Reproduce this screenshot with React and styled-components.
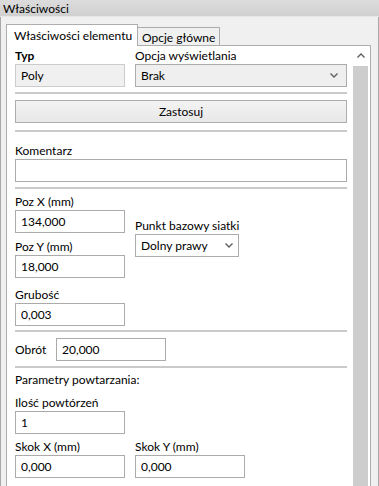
import React from 'react';
import styled, { createGlobalStyle } from 'styled-components';

const GlobalStyle = createGlobalStyle`
  html, body {
    margin: 0;
    padding: 0;
    background: #f0f0f0;
  }
  * {
    box-sizing: border-box;
  }
`;

const font = `font-family: Lato, "Noto Sans", sans-serif; font-size: 12px; color: #000;`;

const Window = styled.div`
  ${font}
  width: 379px;
  height: 486px;
  overflow: hidden;
  display: flex;
  flex-direction: column;
  background: #f0f0f0;
`;

const TitleBar = styled.div`
  height: 17px;
  line-height: 16px;
  padding: 1px 0 0 3px;
  background: linear-gradient(#dcdcdc, #d0d0d0);
  border-bottom: 1px solid #e6e6e6;
  flex-shrink: 0;
`;

const Body = styled.div`
  flex: 1;
  display: flex;
  flex-direction: column;
  padding: 7px 7px 0 5px;
  border-left: 1px solid #a8a8a8;
  border-right: 1px solid #a8a8a8;
  min-height: 0;
`;

const Tabs = styled.div`
  display: flex;
  align-items: flex-end;
  height: 21px;
  position: relative;
  z-index: 1;
`;

const Tab = styled.div`
  width: ${p => p.$w}px;
  height: ${p => (p.$active ? 22 : 18)}px;
  margin-bottom: ${p => (p.$active ? -1 : 0)}px;
  padding: ${p => (p.$active ? '3px 0 0 7px' : '2px 0 0 4px')};
  line-height: 16px;
  background: ${p => (p.$active ? '#fff' : '#f0f0f0')};
  border: 1px solid #adadad;
  border-bottom: none;
  ${p => !p.$active && 'border-left: none;'}
  white-space: nowrap;
`;

const Panel = styled.div`
  flex: 1;
  display: flex;
  background: #fff;
  border: 1px solid #adadad;
  border-bottom: none;
  min-height: 0;
`;

const Content = styled.div`
  flex: 1;
  padding: 2px 6px 0 8px;
  display: flex;
  flex-direction: column;
`;

const ScrollBar = styled.div`
  width: 15px;
  margin-right: 2px;
  display: flex;
  flex-direction: column;
  align-items: stretch;
`;

const ArrowBox = styled.div`
  height: 20px;
  display: flex;
  justify-content: center;
  padding-top: 7px;
`;

const Thumb = styled.div`
  flex: 1;
  background: #cdcdcd;
`;

const Grid = styled.div`
  display: grid;
  grid-template-columns: ${p => p.$cols || '110px 1fr'};
  column-gap: 10px;
  margin-top: ${p => p.$mt || 0}px;
`;

const Column = styled.div`
  display: flex;
  flex-direction: column;
  padding-top: ${p => p.$pt || 0}px;
`;

const Label = styled.div`
  height: 16px;
  line-height: 16px;
  white-space: nowrap;
  font-weight: ${p => (p.$bold ? 700 : 400)};
  margin-top: ${p => p.$mt || 0}px;
`;

const Field = styled.input`
  ${font}
  display: block;
  width: ${p => (p.$w ? `${p.$w}px` : '100%')};
  height: 23px;
  margin: 0;
  padding: 0 5px;
  border: 1px solid ${p => (p.$disabled ? '#cccccc' : '#ababab')};
  background: ${p => (p.$disabled ? '#f0f0f0' : '#fff')};
  outline: none;
  border-radius: 0;
`;

const Select = styled.div`
  width: ${p => (p.$w ? `${p.$w}px` : '100%')};
  height: 23px;
  display: flex;
  align-items: center;
  justify-content: space-between;
  padding: 0 ${p => p.$arrowPad}px 0 5px;
  border: 1px solid #acacac;
  background: ${p => (p.$grey ? '#efefef' : '#fff')};
`;

const Separator = styled.div`
  height: 2px;
  background: #cacaca;
  margin-top: ${p => p.$mt}px;
`;

const Button = styled.div`
  height: 23px;
  margin-top: 6px;
  display: flex;
  align-items: center;
  justify-content: center;
  border: 1px solid #adadad;
  background: linear-gradient(#f3f3f3, #e8e8e8);
`;

const InlineRow = styled.div`
  display: flex;
  align-items: center;
  margin-top: 6px;
`;

const InlineLabel = styled.div`
  width: 41px;
`;

const Chevron = ({ up }) => (
  <svg width="8" height="5" viewBox="0 0 8 5">
    <polyline
      points={up ? '0.5,4.5 4,1 7.5,4.5' : '0.5,0.5 4,4 7.5,0.5'}
      fill="none"
      stroke="#606060"
      strokeWidth="1.4"
    />
  </svg>
);

const App = () => {
  return (
    <Window>
      <GlobalStyle />
      <TitleBar>Właściwości</TitleBar>
      <Body>
        <Tabs>
          <Tab $active $w={132}>Właściwości elementu</Tab>
          <Tab $w={82}>Opcje główne</Tab>
        </Tabs>
        <Panel>
          <Content>
            <Grid>
              <Label $bold>Typ</Label>
              <Label>Opcja wyświetlania</Label>
              <Field $disabled readOnly defaultValue="Poly" />
              <Select $grey $arrowPad={8}>
                <span>Brak</span>
                <Chevron />
              </Select>
            </Grid>
            <Separator $mt={5} />
            <Button>Zastosuj</Button>
            <Separator $mt={7} />
            <Label $mt={11}>Komentarz</Label>
            <Field readOnly defaultValue="" />
            <Separator $mt={5} />
            <Grid $mt={5}>
              <Column>
                <Label>Poz X (mm)</Label>
                <Field readOnly defaultValue="134,000" />
                <Label $mt={6}>Poz Y (mm)</Label>
                <Field readOnly defaultValue="18,000" />
              </Column>
              <Column $pt={24}>
                <Label>Punkt bazowy siatki</Label>
                <Select $w={104} $arrowPad={5}>
                  <span>Dolny prawy</span>
                  <Chevron />
                </Select>
              </Column>
            </Grid>
            <Label $mt={9}>Grubość</Label>
            <Field $w={110} readOnly defaultValue="0,003" />
            <Separator $mt={4} />
            <InlineRow>
              <InlineLabel>Obrót</InlineLabel>
              <Field $w={110} readOnly defaultValue="20,000" />
            </InlineRow>
            <Separator $mt={5} />
            <Label $mt={4}>Parametry powtarzania:</Label>
            <Label $mt={7}>Ilość powtórzeń</Label>
            <Field $w={110} readOnly defaultValue="1" />
            <Grid $cols="110px 110px" $mt={5}>
              <Label>Skok X (mm)</Label>
              <Label>Skok Y (mm)</Label>
              <Field readOnly defaultValue="0,000" />
              <Field readOnly defaultValue="0,000" />
            </Grid>
          </Content>
          <ScrollBar>
            <ArrowBox>
              <Chevron up />
            </ArrowBox>
            <Thumb />
          </ScrollBar>
        </Panel>
      </Body>
    </Window>
  );
};

export default App;
